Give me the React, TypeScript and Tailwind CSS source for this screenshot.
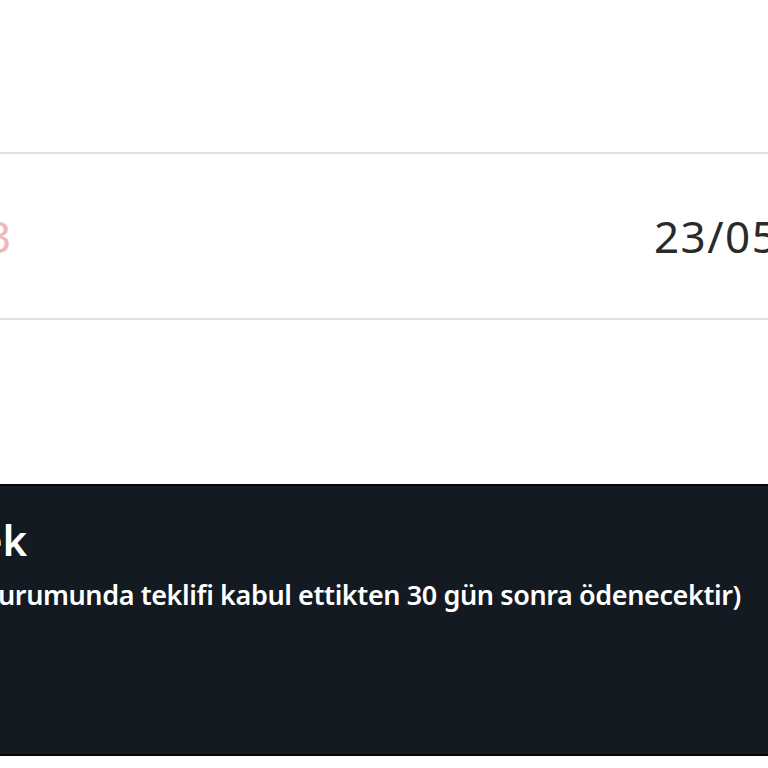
export default function App() {
  return (
    <div className="w-[768px] h-[768px] overflow-hidden bg-white font-['Noto_Sans',sans-serif]">
      <div className="h-[152px]" />

      {/* order row */}
      <div className="flex h-[168px] items-center justify-between border-y-2 border-[#e0e0e0] whitespace-nowrap">
        <span className="-ml-[14px] text-[44px] leading-none text-[#f0b6bd]">3</span>
        <span className="-mr-[135px] text-[44px] leading-none tracking-[1.5px] text-[#2a2a2a]">23/05/2023</span>
      </div>

      <div className="h-[164px]" />

      {/* payment note */}
      <div className="flex h-[272px] flex-col gap-[14px] border-y-2 border-[#050608] bg-[#131a22] pt-[30px] whitespace-nowrap text-white">
        <span className="-ml-[22px] text-[42px] font-semibold leading-[48px]">ek</span>
        <span className="-ml-[2px] text-[27px] font-semibold leading-[34px] tracking-[-0.4px]">
          urumunda teklifi kabul ettikten 30 gün sonra ödenecektir)
        </span>
      </div>
    </div>
  );
}
